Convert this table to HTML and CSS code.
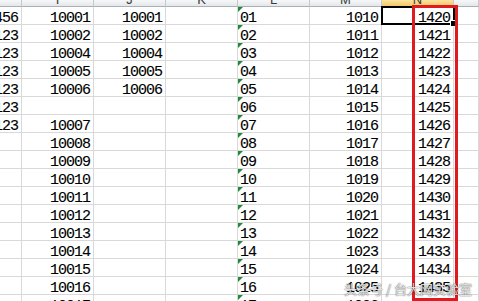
FILE: index.html
```html
<!DOCTYPE html>
<html>
<head>
<meta charset="utf-8">
<link rel="stylesheet" href="styles.css">
</head>
<body>
<div class="wrap">
  <div class="sheet">
    <div class="hc"></div><div class="hc">I</div><div class="hc">J</div><div class="hc">K</div><div class="hc">L</div><div class="hc">M</div><div class="hc hc-sel">N</div><div class="hc"></div>

    <div class="c n"><span>123.456</span></div><div class="c n">10001</div><div class="c n">10001</div><div class="c"></div><div class="c t">01</div><div class="c n">1010</div><div class="c n">1420</div><div class="c"></div>
    <div class="c n"><span>123.123</span></div><div class="c n">10002</div><div class="c n">10002</div><div class="c"></div><div class="c t">02</div><div class="c n">1011</div><div class="c n">1421</div><div class="c"></div>
    <div class="c n"><span>123.123</span></div><div class="c n">10004</div><div class="c n">10004</div><div class="c"></div><div class="c t">03</div><div class="c n">1012</div><div class="c n">1422</div><div class="c"></div>
    <div class="c n"><span>123.123</span></div><div class="c n">10005</div><div class="c n">10005</div><div class="c"></div><div class="c t">04</div><div class="c n">1013</div><div class="c n">1423</div><div class="c"></div>
    <div class="c n"><span>123.123</span></div><div class="c n">10006</div><div class="c n">10006</div><div class="c"></div><div class="c t">05</div><div class="c n">1014</div><div class="c n">1424</div><div class="c"></div>
    <div class="c n"><span>123.123</span></div><div class="c n"></div><div class="c n"></div><div class="c"></div><div class="c t">06</div><div class="c n">1015</div><div class="c n">1425</div><div class="c"></div>
    <div class="c n"><span>123.123</span></div><div class="c n">10007</div><div class="c n"></div><div class="c"></div><div class="c t">07</div><div class="c n">1016</div><div class="c n">1426</div><div class="c"></div>
    <div class="c n"></div><div class="c n">10008</div><div class="c n"></div><div class="c"></div><div class="c t">08</div><div class="c n">1017</div><div class="c n">1427</div><div class="c"></div>
    <div class="c n"></div><div class="c n">10009</div><div class="c n"></div><div class="c"></div><div class="c t">09</div><div class="c n">1018</div><div class="c n">1428</div><div class="c"></div>
    <div class="c n"></div><div class="c n">10010</div><div class="c n"></div><div class="c"></div><div class="c t">10</div><div class="c n">1019</div><div class="c n">1429</div><div class="c"></div>
    <div class="c n"></div><div class="c n">10011</div><div class="c n"></div><div class="c"></div><div class="c t">11</div><div class="c n">1020</div><div class="c n">1430</div><div class="c"></div>
    <div class="c n"></div><div class="c n">10012</div><div class="c n"></div><div class="c"></div><div class="c t">12</div><div class="c n">1021</div><div class="c n">1431</div><div class="c"></div>
    <div class="c n"></div><div class="c n">10013</div><div class="c n"></div><div class="c"></div><div class="c t">13</div><div class="c n">1022</div><div class="c n">1432</div><div class="c"></div>
    <div class="c n"></div><div class="c n">10014</div><div class="c n"></div><div class="c"></div><div class="c t">14</div><div class="c n">1023</div><div class="c n">1433</div><div class="c"></div>
    <div class="c n"></div><div class="c n">10015</div><div class="c n"></div><div class="c"></div><div class="c t">15</div><div class="c n">1024</div><div class="c n">1434</div><div class="c"></div>
    <div class="c n"></div><div class="c n">10016</div><div class="c n"></div><div class="c"></div><div class="c t">16</div><div class="c n">1025</div><div class="c n">1435</div><div class="c"></div>
    <div class="c n"></div><div class="c n">10017</div><div class="c n"></div><div class="c"></div><div class="c t">17</div><div class="c n">1026</div><div class="c n">1436</div><div class="c"></div>
  </div>
  <div class="sel"><span class="handle"></span></div>
  <div class="mark"></div>
  <div class="wm">头条号 / 台大网实验室</div>
</div>
</body>
</html>
```
FILE: styles.css
```css
html, body {
  margin: 0;
  padding: 0;
  background: #fff;
  overflow: hidden;
}
.wrap {
  position: relative;
  width: 479px;
  height: 301px;
  overflow: hidden;
}
.sheet {
  display: grid;
  grid-template-columns: 22px repeat(6, 72px) 1fr;
  grid-template-rows: 7px;
  grid-auto-rows: 18px;
  font-family: "Liberation Mono", "DejaVu Sans Mono", monospace;
  font-size: 15px;
  letter-spacing: -1px;
  color: #000;
}
.hc {
  box-sizing: border-box;
  border-right: 1px solid #c5c9cf;
  border-bottom: 1px solid #a9b0b8;
  background: linear-gradient(#f6f7f8, #e4e7eb);
  font-family: "Liberation Sans", Arial, sans-serif;
  font-size: 13px;
  letter-spacing: 0;
  color: #3b3b3b;
  text-align: center;
  line-height: 0;
  overflow: hidden;
}
.hc-sel {
  background: linear-gradient(#fbe3a0, #f3c765);
  border-bottom-color: #d8a74a;
}
.c {
  position: relative;
  box-sizing: border-box;
  border-right: 1px solid #d9d9d9;
  border-bottom: 1px solid #d9d9d9;
  line-height: 17px;
  padding-top: 3px;
  overflow: hidden;
  white-space: nowrap;
  -webkit-text-stroke: 0.12px #000;
}
.n {
  display: flex;
  justify-content: flex-end;
  padding-right: 3px;
}
.n span {
  flex: none;
}
.t {
  padding-left: 2px;
}
.t::before {
  content: "";
  position: absolute;
  left: 0;
  top: 0;
  width: 0;
  height: 0;
  border-top: 5px solid #1f8a3a;
  border-right: 5px solid transparent;
}
.sel {
  position: absolute;
  left: 381px;
  top: 6px;
  width: 74px;
  height: 19px;
  box-sizing: border-box;
  border: 2px solid #000;
}
.handle {
  position: absolute;
  right: -4px;
  bottom: -4px;
  width: 5px;
  height: 5px;
  background: #000;
  border: 1px solid #fff;
}
.mark {
  position: absolute;
  left: 412px;
  top: 5px;
  width: 46px;
  height: 296px;
  box-sizing: border-box;
  border: 3px solid #e01b1f;
}
.wm {
  position: absolute;
  left: 344px;
  top: 281px;
  font-family: "Noto Sans CJK SC", sans-serif;
  font-size: 13px;
  line-height: 16px;
  color: rgba(255, 255, 255, 0.85);
  text-shadow: 0 0 1px rgba(0, 0, 0, 0.7), 0 0 2px rgba(0, 0, 0, 0.35);
  white-space: nowrap;
}
```
